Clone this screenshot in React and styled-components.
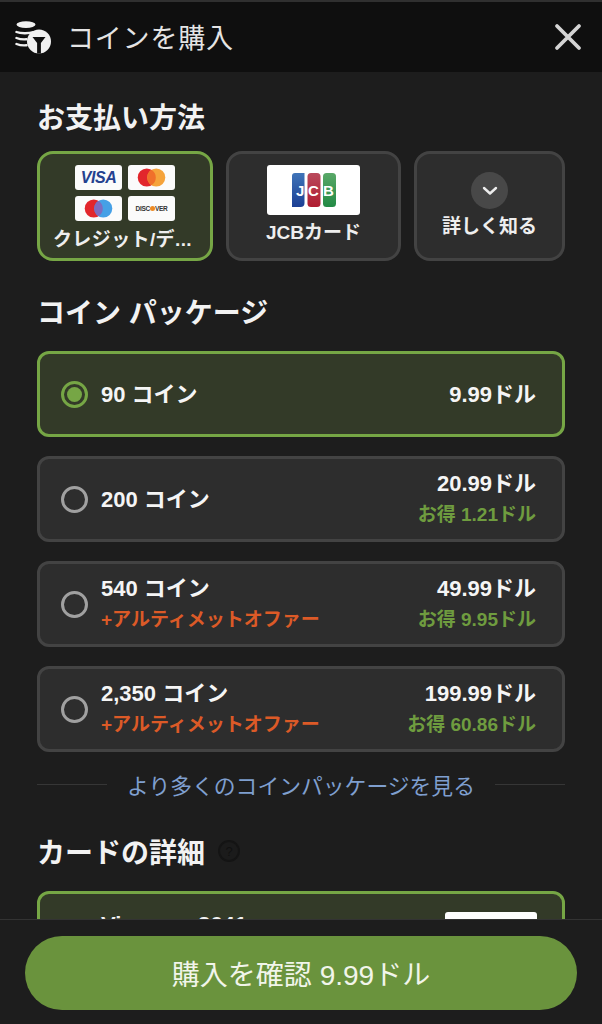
import React from "react";
import styled, { createGlobalStyle } from "styled-components";

const FONT = `"Liberation Sans", "Noto Sans CJK JP", sans-serif`;

const GlobalStyle = createGlobalStyle`
  html, body {
    margin: 0;
    padding: 0;
    background: #1d1d1d;
  }
  * {
    box-sizing: border-box;
  }
`;

const Page = styled.div`
  width: 602px;
  height: 1024px;
  display: flex;
  flex-direction: column;
  overflow: hidden;
  background: #1d1d1d;
  color: #fff;
  font-family: ${FONT};
  border-top: 2px solid #303030;
`;

const Header = styled.header`
  height: 70px;
  flex: none;
  display: flex;
  align-items: center;
  padding: 0 20px 0 15px;
  background: #0f0f0f;
`;

const HeaderTitle = styled.h1`
  flex: 1;
  margin: -2px 0 0 16px;
  font-size: 27px;
  font-weight: 400;
  letter-spacing: 0.8px;
  color: #e4e4e4;
`;

const Body = styled.main`
  flex: 1;
  min-height: 0;
  overflow: hidden;
  padding: 27px 37px 0;
`;

const SectionTitle = styled.h2`
  display: flex;
  align-items: center;
  gap: 13px;
  margin: ${(p) => p.$top || 0}px 0 0;
  height: 34px;
  font-size: 28px;
  font-weight: 700;
  color: #f2f2f2;
`;

const Methods = styled.div`
  display: grid;
  grid-template-columns: 176px 175px 151px;
  gap: 13px;
  margin-top: 18px;
`;

const Method = styled.div`
  height: 110px;
  display: flex;
  flex-direction: column;
  align-items: center;
  border-radius: 16px;
  border: 3px solid ${(p) => (p.$active ? "#76a645" : "#434343")};
  background: ${(p) => (p.$active ? "#333a28" : "#2d2d2d")};
`;

const MethodLabel = styled.span`
  font-size: 19px;
  font-weight: 700;
  line-height: 24px;
  color: #eeeeee;
  white-space: nowrap;
`;

const TruncatedLabel = styled(MethodLabel)`
  letter-spacing: 0.4px;
  margin-right: 5px;
`;

const CardGrid = styled.div`
  display: grid;
  grid-template-columns: 47px 47px;
  grid-auto-rows: 25px;
  gap: 6px 6px;
  margin: 11px 0 7px;
`;

const CardLogo = styled.div`
  display: flex;
  align-items: center;
  justify-content: center;
  background: #fbfbfb;
  border-radius: 3px;
`;

const VisaText = styled.span`
  font-size: 16px;
  font-weight: 700;
  font-style: italic;
  letter-spacing: -0.4px;
  color: #24418f;
`;

const DiscoverText = styled.span`
  display: flex;
  align-items: center;
  font-size: 6.5px;
  font-weight: 700;
  letter-spacing: -0.3px;
  color: #333;
`;

const DiscoverDot = styled.i`
  width: 5px;
  height: 5px;
  border-radius: 50%;
  background: #ee8a23;
`;

const JcbLogo = styled.div`
  width: 93px;
  height: 50px;
  margin: 11px 0 6px;
  display: flex;
  align-items: center;
  justify-content: center;
  background: #fff;
  border-radius: 3px;
`;

const MoreCircle = styled.div`
  width: 37px;
  height: 37px;
  margin: 18px 0 6px;
  display: flex;
  align-items: center;
  justify-content: center;
  border-radius: 50%;
  background: #484848;
`;

const Packages = styled.div`
  display: flex;
  flex-direction: column;
  gap: 19px;
  margin-top: 23px;
`;

const PackageRow = styled.div`
  height: 86px;
  display: flex;
  align-items: center;
  padding: 0 26px 0 21px;
  border-radius: 12px;
  border: 3px solid ${(p) => (p.$active ? "#76a645" : "#434343")};
  background: ${(p) => (p.$active ? "#333a28" : "#2d2d2d")};
`;

const Radio = styled.span`
  width: 27px;
  height: 27px;
  flex: none;
  display: flex;
  align-items: center;
  justify-content: center;
  border-radius: 50%;
  border: 3px solid ${(p) => (p.$active ? "#76a645" : "#a0a0a0")};

  &::after {
    content: "";
    display: ${(p) => (p.$active ? "block" : "none")};
    width: 15px;
    height: 15px;
    border-radius: 50%;
    background: #76a645;
  }
`;

const PackageInfo = styled.div`
  flex: 1;
  margin-left: 13px;
  padding-top: 1px;
  display: flex;
  flex-direction: column;
  gap: 5px;
`;

const PriceInfo = styled.div`
  padding-top: 1px;
  display: flex;
  flex-direction: column;
  align-items: flex-end;
  gap: 5px;
`;

const MainText = styled.span`
  font-size: 22px;
  line-height: 26px;
  font-weight: 700;
  color: #f5f5f5;
`;

const OfferText = styled.span`
  font-size: 19px;
  line-height: 26px;
  font-weight: 700;
  color: #dc5a27;
`;

const SaveText = styled.span`
  font-size: 19px;
  line-height: 26px;
  font-weight: 700;
  color: #6f9c3f;
`;

const MoreRow = styled.div`
  display: flex;
  align-items: center;
  gap: 20px;
  height: 30px;
  margin-top: 17px;

  &::before,
  &::after {
    content: "";
    flex: 1;
    height: 1px;
    background: #363636;
  }
`;

const MoreLink = styled.span`
  font-size: 21.8px;
  color: #7f9fcf;
  white-space: nowrap;
`;

const HelpIcon = styled.span`
  width: 22px;
  height: 22px;
  display: flex;
  align-items: center;
  justify-content: center;
  border-radius: 50%;
  border: 2px solid #141414;
  background: #1b1b1b;
  color: #111111;
  font-size: 13px;
  font-weight: 400;
`;

const SavedCard = styled.div`
  height: 70px;
  margin-top: 23px;
  display: flex;
  justify-content: space-between;
  padding: 18px 25px 0 61px;
  border-radius: 12px;
  border: 3px solid #76a645;
  background: #333a28;
`;

const SavedCardText = styled.span`
  font-size: 22px;
  line-height: 26px;
  font-weight: 700;
  word-spacing: 46px;
  color: #f0f0f0;
`;

const SavedCardLogo = styled.div`
  width: 92px;
  height: 40px;
  background: #fff;
  border-radius: 3px;
`;

const Footer = styled.footer`
  height: 105px;
  flex: none;
  padding: 16px 25px 0;
  background: #1d1d1d;
  border-top: 1px solid #333333;
`;

const ConfirmButton = styled.button`
  width: 100%;
  height: 74px;
  border: none;
  border-radius: 37px;
  background: #6a933d;
  color: #f1f5ea;
  font-family: ${FONT};
  font-size: 28px;
  font-weight: 400;
`;

const CoinIcon = () => (
  <svg width="36" height="33" viewBox="0 0 36 33" fill="none">
    <ellipse cx="11" cy="3.6" rx="9.5" ry="3.4" fill="#f0f0f0" />
    <path d="M1.5 11c4 1.5 12 1.6 17 .2M1.5 17c3 1.2 7 1.6 10 1.3M1.5 23c3 1.2 7 1.6 10 1.3" stroke="#f0f0f0" strokeWidth="2.4" strokeLinecap="round" />
    <circle cx="24" cy="20.5" r="12" fill="#f0f0f0" />
    <path d="M17.5 16h13l-4.6 6v10.5h-3.8V22z" fill="#0f0f0f" />
  </svg>
);

const CloseIcon = () => (
  <svg width="28" height="28" viewBox="0 0 28 28" fill="none">
    <path d="M3 3l22 22M25 3L3 25" stroke="#d4d4d4" strokeWidth="3.8" strokeLinecap="round" />
  </svg>
);

const Mastercard = () => (
  <svg width="29" height="19" viewBox="0 0 30 20">
    <circle cx="10" cy="10" r="9.5" fill="#e2262c" />
    <circle cx="20" cy="10" r="9.5" fill="#f5a33b" />
    <path d="M15 1.9a9.5 9.5 0 0 1 0 16.2a9.5 9.5 0 0 1 0-16.2z" fill="#f0702b" />
  </svg>
);

const Maestro = () => (
  <svg width="29" height="19" viewBox="0 0 30 20">
    <circle cx="10" cy="10" r="9.5" fill="#e2262c" />
    <circle cx="20" cy="10" r="9.5" fill="#45a0e6" />
    <path d="M15 1.9a9.5 9.5 0 0 1 0 16.2a9.5 9.5 0 0 1 0-16.2z" fill="#7d6cc0" />
  </svg>
);

const JcbMark = () => (
  <svg width="44" height="34" viewBox="0 0 44 34">
    <defs>
      <linearGradient id="jb" x1="0" y1="0" x2="0" y2="1">
        <stop offset="0" stopColor="#3f74b8" />
        <stop offset="1" stopColor="#1c3f94" />
      </linearGradient>
      <linearGradient id="jr" x1="0" y1="0" x2="0" y2="1">
        <stop offset="0" stopColor="#b94a5c" />
        <stop offset="1" stopColor="#b01c30" />
      </linearGradient>
      <linearGradient id="jg" x1="0" y1="0" x2="0" y2="1">
        <stop offset="0" stopColor="#5aa868" />
        <stop offset="1" stopColor="#228a45" />
      </linearGradient>
    </defs>
    <path d="M3 0h9.5v30a4 4 0 0 1-4 4H0V3a3 3 0 0 1 3-3z" fill="url(#jb)" />
    <rect x="15.5" width="13" height="34" rx="3.5" fill="url(#jr)" />
    <rect x="31" width="13" height="34" rx="3.5" fill="url(#jg)" />
    <text x="4" y="23" fontFamily="Liberation Sans" fontWeight="700" fontSize="15" fill="#fff">J</text>
    <text x="16" y="23" fontFamily="Liberation Sans" fontWeight="700" fontSize="15" fill="#fff">C</text>
    <text x="31" y="23" fontFamily="Liberation Sans" fontWeight="700" fontSize="15" fill="#fff">B</text>
  </svg>
);

const ChevronIcon = () => (
  <svg width="16" height="10" viewBox="0 0 16 10" fill="none">
    <path d="M2 2l6 5.5L14 2" stroke="#ededed" strokeWidth="2.4" strokeLinecap="round" strokeLinejoin="round" />
  </svg>
);

const packages = [
  { coins: "90 コイン", price: "9.99ドル", active: true },
  { coins: "200 コイン", price: "20.99ドル", save: "お得 1.21ドル" },
  { coins: "540 コイン", price: "49.99ドル", save: "お得 9.95ドル", offer: "+アルティメットオファー" },
  { coins: "2,350 コイン", price: "199.99ドル", save: "お得 60.86ドル", offer: "+アルティメットオファー" },
];

const App = () => {
  return (
    <Page>
      <GlobalStyle />
      <Header>
        <CoinIcon />
        <HeaderTitle>コインを購入</HeaderTitle>
        <CloseIcon />
      </Header>
      <Body>
        <SectionTitle>お支払い方法</SectionTitle>
        <Methods>
          <Method $active>
            <CardGrid>
              <CardLogo><VisaText>VISA</VisaText></CardLogo>
              <CardLogo><Mastercard /></CardLogo>
              <CardLogo><Maestro /></CardLogo>
              <CardLogo><DiscoverText>DISC<DiscoverDot />VER</DiscoverText></CardLogo>
            </CardGrid>
            <TruncatedLabel>クレジット/デ...</TruncatedLabel>
          </Method>
          <Method>
            <JcbLogo><JcbMark /></JcbLogo>
            <MethodLabel>JCBカード</MethodLabel>
          </Method>
          <Method>
            <MoreCircle><ChevronIcon /></MoreCircle>
            <MethodLabel>詳しく知る</MethodLabel>
          </Method>
        </Methods>

        <SectionTitle $top={33}>コイン パッケージ</SectionTitle>
        <Packages>
          {packages.map((item) => (
            <PackageRow key={item.coins} $active={item.active}>
              <Radio $active={item.active} />
              <PackageInfo>
                <MainText>{item.coins}</MainText>
                {item.offer && <OfferText>{item.offer}</OfferText>}
              </PackageInfo>
              <PriceInfo>
                <MainText>{item.price}</MainText>
                {item.save && <SaveText>{item.save}</SaveText>}
              </PriceInfo>
            </PackageRow>
          ))}
        </Packages>

        <MoreRow>
          <MoreLink>より多くのコインパッケージを見る</MoreLink>
        </MoreRow>

        <SectionTitle $top={35}>
          カードの詳細
          <HelpIcon>?</HelpIcon>
        </SectionTitle>
        <SavedCard>
          <SavedCardText>Visa 2641</SavedCardText>
          <SavedCardLogo />
        </SavedCard>
      </Body>
      <Footer>
        <ConfirmButton>購入を確認 9.99ドル</ConfirmButton>
      </Footer>
    </Page>
  );
};

export default App;
